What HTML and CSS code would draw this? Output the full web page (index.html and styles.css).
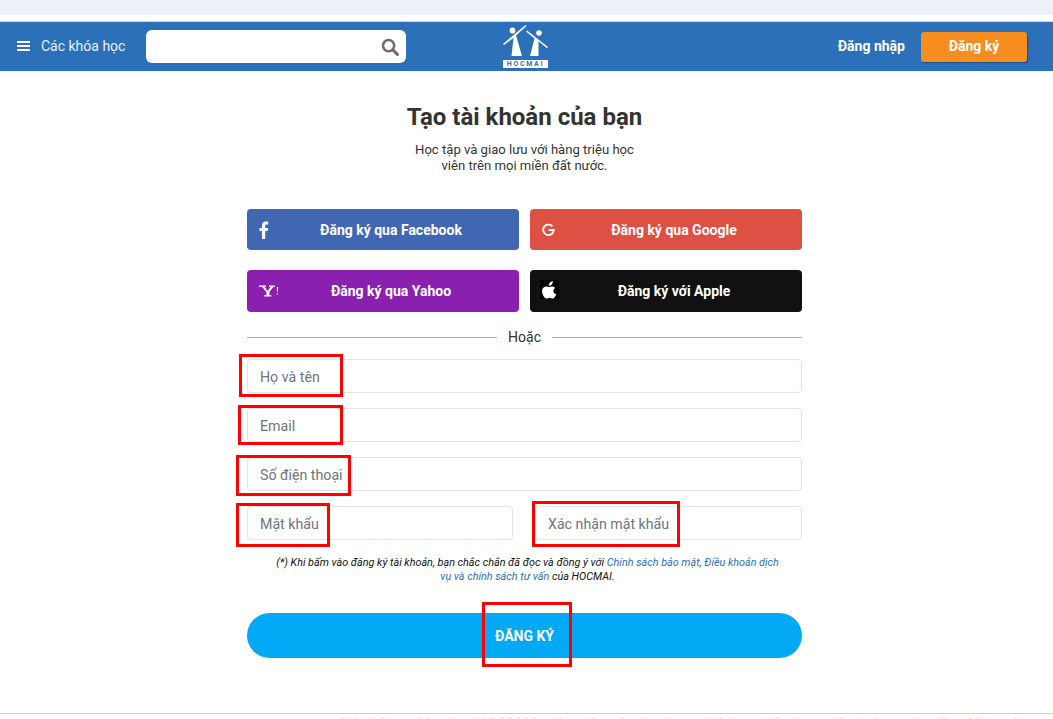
FILE: index.html
```html
<!DOCTYPE html>
<html lang="vi">
<head>
    <meta charset="UTF-8">
    <meta name="viewport" content="width=device-width, initial-scale=1.0">
    <title>Đăng ký - HOCMAI</title>
    <link rel="stylesheet" href="styles.css">
</head>
<body>
    <div class="topstrip"></div>

    <header class="header">
        <div class="header-left">
            <a class="courses" href="#">
                <span class="burger"><i></i><i></i><i></i></span>
                Các khóa học
            </a>
            <div class="search">
                <input type="text" aria-label="Tìm kiếm">
                <svg width="18" height="18" viewBox="0 0 18 18" fill="none" stroke="#6e6e6e">
                    <circle cx="7.6" cy="7.6" r="5.6" stroke-width="2.6"/>
                    <path d="M11.8 11.8l4.6 4.6" stroke-width="3" stroke-linecap="round"/>
                </svg>
            </div>
        </div>

        <a class="logo" href="#">
            <svg width="45" height="34" viewBox="0 0 45 34" fill="#fff">
                <circle cx="9.5" cy="5.5" r="2.9"/>
                <circle cx="36" cy="8" r="2.8"/>
                <path d="M22.500 0l1 1L13 10.500 19 31H8.500L10.500 13 1 20 0 19z"/>
                <path d="M23 6.500l1-1 21 16.500-1 1.200-8.500-7L35.500 31H27l4.500-17.500z"/>
            </svg>
            <span class="logo-name">HOCMAI</span>
        </a>

        <div class="header-right">
            <a class="login" href="#">Đăng nhập</a>
            <a class="signup" href="#">Đăng ký</a>
        </div>
    </header>

    <main class="register">
        <h1>Tạo tài khoản của bạn</h1>
        <p class="lead">Học tập và giao lưu với hàng triệu học<br>viên trên mọi miền đất nước.</p>

        <div class="socials">
            <a class="social facebook" href="#">
                <svg class="social-icon" width="10" height="18" viewBox="0 0 10 18" fill="#fff">
                    <path d="M3 18V10H0.500V7H3V4.500C3 1.800 4.500 0.500 6.800 0.500H9.200V3.500H7.600C6.600 3.500 6.200 4 6.200 4.900V7H9.200L8.700 10H6.200V18z"/>
                </svg>
                Đăng ký qua Facebook
            </a>
            <a class="social google" href="#">
                <svg class="social-icon" width="13" height="13" viewBox="0 0 14 14" fill="none" stroke="#fff" stroke-width="2">
                    <path d="M11.300 3A5.700 5.700 0 1 0 12.700 7H7.200"/>
                </svg>
                Đăng ký qua Google
            </a>
            <a class="social yahoo" href="#">
                <svg class="social-icon" width="20" height="13" viewBox="0 0 20 13" fill="#fff">
                    <path d="M0 1h7v1.200H5.400L8.600 6.600 11.700 2.200H10V1h6v1.200h-1.600L10.400 7.500V10.800H12.400V12H5.200V10.800H7.400V7.600L3 2.200H0z"/>
                    <path d="M17.800 2.500h1.400l-.5 5h-.6z"/>
                    <circle cx="18.300" cy="9.500" r=".7"/>
                </svg>
                Đăng ký qua Yahoo
            </a>
            <a class="social apple" href="#">
                <span class="apple-box">
                    <svg width="15" height="18" viewBox="0 0 15 18" fill="#fff">
                        <path d="M10.800 0.300c.1 1.300-.4 2.400-1.100 3.200-.7.800-1.800 1.400-2.900 1.300-.1-1.200.4-2.400 1.100-3.100C8.600.900 9.800.300 10.800.300z"/>
                        <path d="M14.500 13.100c-.4.900-.6 1.300-1.100 2.100-.7 1.100-1.700 2.400-2.900 2.400-1.100 0-1.400-.7-2.900-.7s-1.900.7-3 .7c-1.200 0-2.100-1.200-2.800-2.200C-.2 12.500-.4 9.200.7 7.400c.8-1.300 2.100-2 3.300-2 1.300 0 2 .7 3.100.7 1 0 1.700-.7 3.100-.7 1.100 0 2.300.6 3.100 1.600-2.700 1.500-2.300 5.300.2 6.100z"/>
                    </svg>
                </span>
                Đăng ký với Apple
            </a>
        </div>

        <div class="divider"><span>Hoặc</span></div>

        <form class="fields">
            <input class="field wide" type="text" placeholder="Họ và tên">
            <input class="field wide" type="text" placeholder="Email">
            <input class="field wide" type="text" placeholder="Số điện thoại">
            <div class="field-pair">
                <input class="field" type="password" placeholder="Mật khẩu">
                <input class="field" type="password" placeholder="Xác nhận mật khẩu">
            </div>
        </form>

        <p class="terms">(*) Khi bấm vào đăng ký tài khoản, bạn chắc chắn đã đọc và đồng ý với <a href="#">Chính sách bảo mật, Điều khoản dịch vụ và chính sách tư vấn</a> của HOCMAI.</p>

        <button class="submit" type="button">ĐĂNG KÝ</button>
    </main>

    <footer class="footer">Hệ thống giáo dục HOCMAI - Học tập và giao lưu với hàng triệu học viên trên mọi miền đất nước</footer>

    <!-- red boxes drawn on the screenshot -->
    <div class="mark mark-name"></div>
    <div class="mark mark-email"></div>
    <div class="mark mark-phone"></div>
    <div class="mark mark-pass"></div>
    <div class="mark mark-confirm"></div>
    <div class="mark mark-submit"></div>
</body>
</html>
```

FILE: styles.css
```css
* {
    box-sizing: border-box;
}
html, body {
    height: 719px;
    overflow: hidden;
}
body {
    margin: 0;
    position: relative;
    font-family: Roboto, "Liberation Sans", sans-serif;
    color: #333;
    background: #fff;
}
a {
    text-decoration: none;
    color: inherit;
}

.topstrip {
    height: 15px;
    background: #ecf0f9;
    margin-bottom: 6px;
}

/* header */
.header {
    height: 50px;
    background: #2b70b8;
    border-top: 1px solid #c9d6e4;
    display: grid;
    grid-template-columns: 486px auto 1fr;
    align-items: center;
    padding: 0 26px 0 17px;
    color: #fff;
}
.header-left {
    display: flex;
    align-items: center;
    gap: 21px;
}
.courses {
    display: flex;
    align-items: center;
    gap: 11px;
    font-size: 14px;
    line-height: 16px;
    margin-top: -1px;
    color: #e9f1fa;
}
.burger {
    display: flex;
    flex-direction: column;
    gap: 2px;
    width: 13px;
}
.burger i {
    display: block;
    height: 2px;
    background: #fff;
}
.search {
    width: 260px;
    height: 33px;
    background: #fff;
    border-radius: 6px;
    display: flex;
    align-items: center;
    padding-right: 7px;
}
.search input {
    flex: 1;
    min-width: 0;
    border: 0;
    outline: 0;
    background: none;
}
.logo {
    display: flex;
    flex-direction: column;
    align-items: center;
    width: 45px;
}
.logo svg {
    display: block;
}
.logo-name {
    width: 45px;
    height: 8px;
    margin-top: 1px;
    background: #fff;
    color: #2b70b8;
    font-size: 7px;
    line-height: 8px;
    font-weight: 700;
    letter-spacing: 1.7px;
    text-align: center;
}
.header-right {
    display: flex;
    justify-content: flex-end;
    align-items: center;
    gap: 16px;
}
.login {
    font-size: 14px;
    line-height: 16px;
    margin-top: -2px;
    font-weight: 700;
}
.signup {
    width: 106px;
    height: 30px;
    background: #f78d1f;
    border-radius: 3px;
    box-shadow: 1px 1px 1px #1d4f85;
    font-size: 14px;
    font-weight: 700;
    line-height: 29px;
    text-align: center;
}

/* form */
.register {
    width: 555px;
    margin: 0 auto;
    transform: translateX(-2px);
}
.register h1 {
    margin: 32px 0 0;
    font-size: 24px;
    line-height: 28px;
    font-weight: 700;
    text-align: center;
}
.lead {
    margin: 11px 0 0;
    font-size: 13.100px;
    line-height: 16px;
    text-align: center;
}
.socials {
    display: grid;
    grid-template-columns: 272px 272px;
    grid-template-rows: 41px 42px;
    justify-content: space-between;
    row-gap: 20px;
    margin-top: 35px;
}
.social {
    position: relative;
    display: flex;
    align-items: center;
    justify-content: center;
    padding-left: 16px;
    border-radius: 4px;
    color: #fff;
    font-size: 14px;
    font-weight: 700;
}
.social-icon {
    position: absolute;
    left: 12px;
    top: 50%;
    transform: translateY(-50%);
}
.facebook { background: #4267b2; }
.google { background: #dd5044; }
.yahoo { background: #8a20b0; }
.apple { background: #111; }
.apple-box {
    position: absolute;
    left: 10px;
    top: 10px;
    width: 19px;
    height: 19px;
    background: #000;
    display: flex;
    align-items: center;
    justify-content: center;
}

.divider {
    display: flex;
    align-items: center;
    gap: 11px;
    margin-top: 16px;
    height: 18px;
    font-size: 14px;
}
.divider::before, .divider::after {
    content: "";
    flex: 1;
    height: 1px;
    background: #aaa;
}

.fields {
    display: flex;
    flex-direction: column;
    gap: 15px;
    margin-top: 13px;
}
.field {
    width: 100%;
    height: 34px;
    padding: 2px 12px 0;
    border: 1px solid #e2e2e2;
    border-radius: 4px;
    outline: 0;
    background: #fff;
    font-family: inherit;
    font-size: 14.200px;
}
.field::placeholder {
    color: #6c757d;
    opacity: 1;
}
.field-pair {
    display: grid;
    grid-template-columns: 266px 267px;
    justify-content: space-between;
}

.terms {
    width: 516px;
    margin: 16px auto 0;
    padding-left: 6px;
    font-size: 10.800px;
    line-height: 14px;
    font-style: italic;
    color: #111;
    text-align: center;
}
.terms a {
    color: #2b70b8;
}
.submit {
    display: block;
    width: 100%;
    height: 45px;
    margin-top: 29px;
    border: 0;
    border-radius: 23px;
    background: #03a9f4;
    color: #fff;
    font-family: inherit;
    font-size: 14px;
    font-weight: 700;
}

.footer {
    position: absolute;
    left: 0;
    right: 0;
    top: 713px;
    height: 6px;
    overflow: hidden;
    border-top: 1px solid #ccc;
    padding-left: 340px;
    font-size: 16px;
    line-height: 20px;
    font-weight: 700;
    color: #f3efe0;
    white-space: nowrap;
}

/* annotation boxes */
.mark {
    position: absolute;
    border: 3px solid #f00;
}
.mark-name { left: 239px; top: 354px; width: 104px; height: 43px; }
.mark-email { left: 238px; top: 405px; width: 105px; height: 40px; }
.mark-phone { left: 236px; top: 455px; width: 115px; height: 41px; }
.mark-pass { left: 236px; top: 503px; width: 94px; height: 44px; }
.mark-confirm { left: 532px; top: 501px; width: 148px; height: 46px; }
.mark-submit { left: 482px; top: 602px; width: 90px; height: 65px; }
```
